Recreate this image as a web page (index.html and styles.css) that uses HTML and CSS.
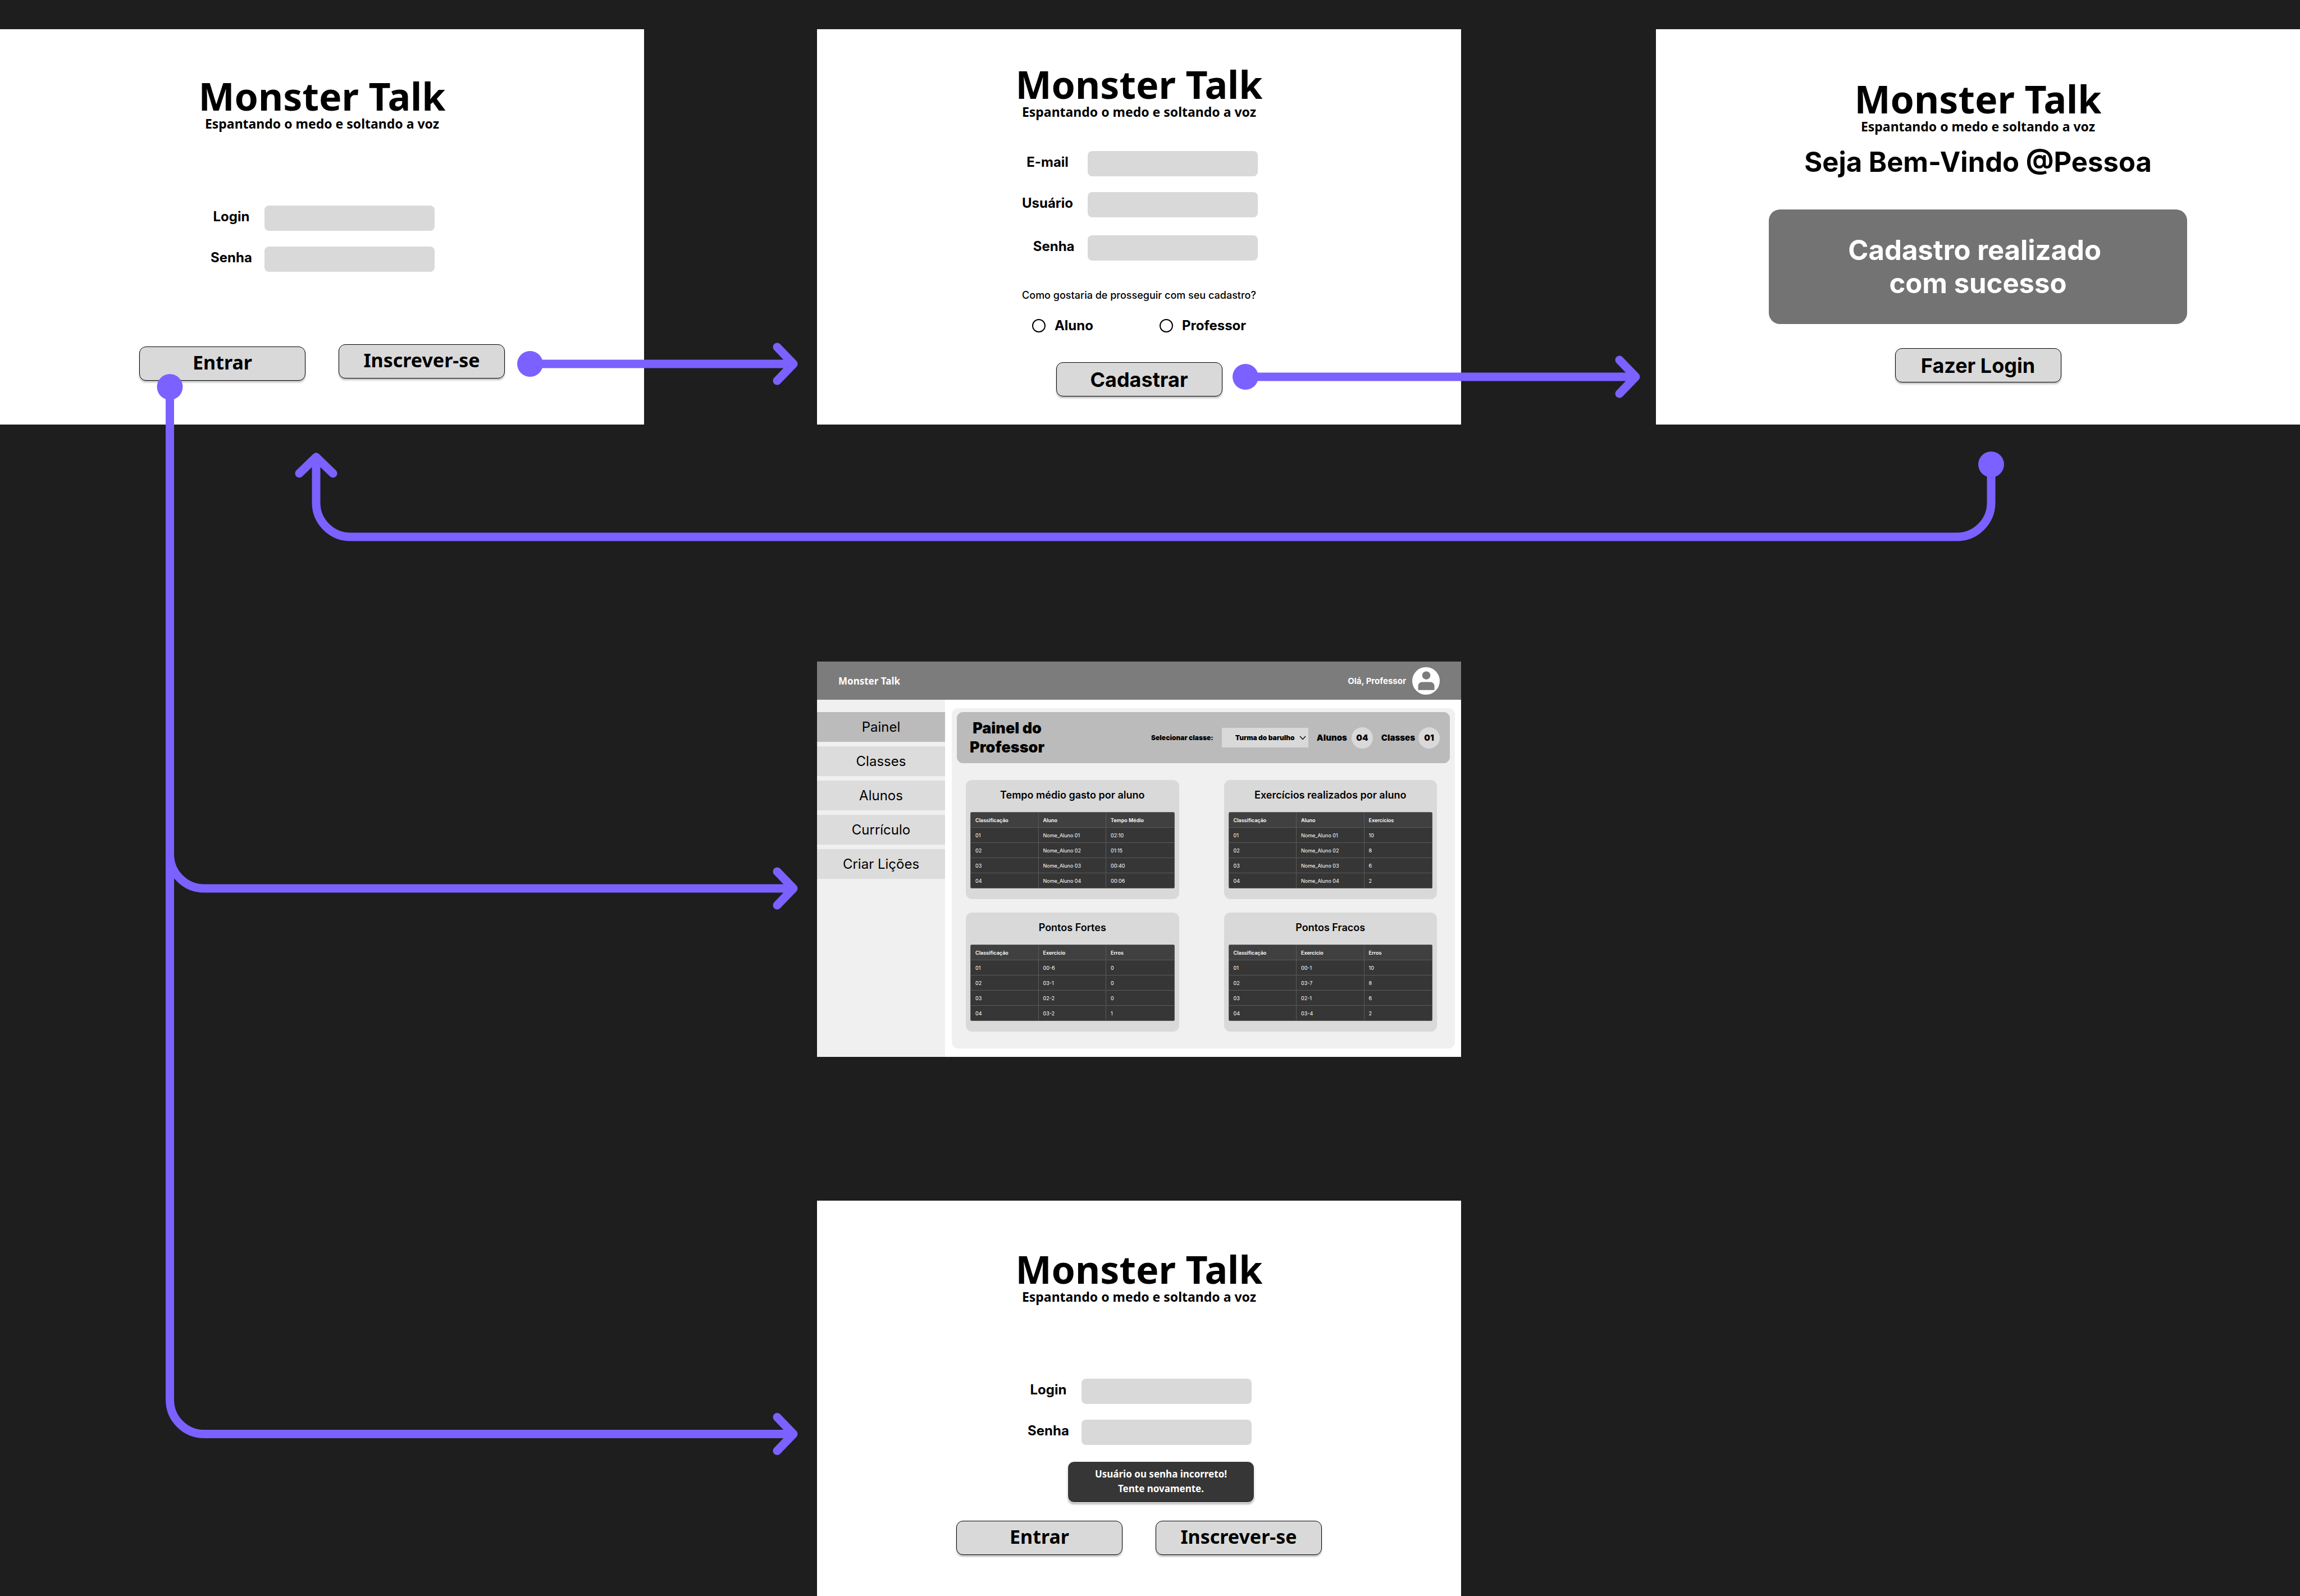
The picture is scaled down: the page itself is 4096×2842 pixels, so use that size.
FILE: index.html
```html
<!DOCTYPE html>
<html lang="pt-BR">
<head>
<meta charset="utf-8">
<meta name="viewport" content="width=device-width, initial-scale=1">
<title>Monster Talk – fluxo de telas</title>
<link rel="stylesheet" href="styles.css">
</head>
<body>
<main class="board">

  <section class="screen screen--login">
    <header class="brand">
      <h1 class="brand__name">Monster Talk</h1>
      <p class="brand__tagline">Espantando o medo e soltando a voz</p>
    </header>
    <form class="form">
      <div class="fields">
        <div class="field">
          <label class="field__label" for="login-user">Login</label>
          <input class="field__input" id="login-user" type="text">
        </div>
        <div class="field">
          <label class="field__label" for="login-pass">Senha</label>
          <input class="field__input" id="login-pass" type="password">
        </div>
      </div>
      <div class="actions actions--stepped">
        <button class="btn btn--brand" type="button">Entrar</button>
        <button class="btn btn--brand" type="button">Inscrever-se</button>
      </div>
    </form>
  </section>

  <section class="screen screen--signup">
    <header class="brand">
      <h1 class="brand__name">Monster Talk</h1>
      <p class="brand__tagline">Espantando o medo e soltando a voz</p>
    </header>
    <form class="form">
      <div class="fields">
        <div class="field">
          <label class="field__label" for="signup-email">E-mail</label>
          <input class="field__input" id="signup-email" type="email">
        </div>
        <div class="field">
          <label class="field__label" for="signup-user">Usuário</label>
          <input class="field__input" id="signup-user" type="text">
        </div>
        <div class="field field--last">
          <label class="field__label" for="signup-pass">Senha</label>
          <input class="field__input" id="signup-pass" type="password">
        </div>
      </div>
      <fieldset class="roles">
        <legend class="roles__question">Como gostaria de prosseguir com seu cadastro?</legend>
        <div class="roles__options">
          <label class="role"><input class="role__input" type="radio" name="role">Aluno</label>
          <label class="role"><input class="role__input" type="radio" name="role">Professor</label>
        </div>
      </fieldset>
      <button class="btn" type="button">Cadastrar</button>
    </form>
  </section>

  <section class="screen screen--welcome">
    <header class="brand">
      <h1 class="brand__name">Monster Talk</h1>
      <p class="brand__tagline">Espantando o medo e soltando a voz</p>
    </header>
    <h2 class="welcome">Seja Bem-Vindo @Pessoa</h2>
    <p class="notice">Cadastro realizado&nbsp;<br>com sucesso</p>
    <button class="btn" type="button">Fazer Login</button>
  </section>

  <section class="screen screen--dashboard">
    <header class="topbar">
      <span class="topbar__brand">Monster Talk</span>
      <div class="topbar__user">
        <span>Olá, Professor</span>
        <svg class="avatar" viewBox="0 0 49 49" aria-hidden="true">
          <circle cx="24.5" cy="24.5" r="24.5" fill="#fff"/>
          <circle cx="25" cy="14.7" r="7.3" fill="#7c7c7c"/>
          <path d="M10.5 40.7V33.4a7 7 0 0 1 7-7H32.5a7 7 0 0 1 7 7V40.7Z" fill="#7c7c7c"/>
        </svg>
      </div>
    </header>
    <div class="layout">
      <nav class="menu">
        <a class="menu__item menu__item--active" href="#painel">Painel</a>
        <a class="menu__item" href="#classes">Classes</a>
        <a class="menu__item" href="#alunos">Alunos</a>
        <a class="menu__item" href="#curriculo">Currículo</a>
        <a class="menu__item" href="#licoes">Criar Lições</a>
      </nav>
      <div class="content">
        <div class="panel">
          <div class="banner">
            <h2 class="banner__title">Painel do<br>Professor</h2>
            <div class="filters">
              <label class="filters__label" for="class-select">Selecionar classe:</label>
              <span class="picker">
                <select class="picker__select" id="class-select"><option>Turma do barulho</option></select>
                <svg class="picker__arrow" viewBox="0 0 12 8" aria-hidden="true"><path d="M1 1 6 6.5 11 1" fill="none" stroke="#000" stroke-width="1.3"/></svg>
              </span>
              <span class="count count--students">Alunos <span class="count__value">04</span></span>
              <span class="count">Classes <span class="count__value">01</span></span>
            </div>
          </div>
          <div class="cards">
            <section class="card">
              <h3 class="card__title">Tempo médio gasto por aluno</h3>
              <table class="table">
                <thead><tr><th>Classificação</th><th>Aluno</th><th>Tempo Médio</th></tr></thead>
                <tbody>
                  <tr><td>01</td><td>Nome_Aluno 01</td><td>02:10</td></tr>
                  <tr><td>02</td><td>Nome_Aluno 02</td><td>01:15</td></tr>
                  <tr><td>03</td><td>Nome_Aluno 03</td><td>00:40</td></tr>
                  <tr><td>04</td><td>Nome_Aluno 04</td><td>00:06</td></tr>
                </tbody>
              </table>
            </section>
            <section class="card">
              <h3 class="card__title">Exercícios realizados por aluno</h3>
              <table class="table">
                <thead><tr><th>Classificação</th><th>Aluno</th><th>Exercícios</th></tr></thead>
                <tbody>
                  <tr><td>01</td><td>Nome_Aluno 01</td><td>10</td></tr>
                  <tr><td>02</td><td>Nome_Aluno 02</td><td>8</td></tr>
                  <tr><td>03</td><td>Nome_Aluno 03</td><td>6</td></tr>
                  <tr><td>04</td><td>Nome_Aluno 04</td><td>2</td></tr>
                </tbody>
              </table>
            </section>
            <section class="card">
              <h3 class="card__title">Pontos Fortes</h3>
              <table class="table">
                <thead><tr><th>Classificação</th><th>Exercicio</th><th>Erros</th></tr></thead>
                <tbody>
                  <tr><td>01</td><td>00-6</td><td>0</td></tr>
                  <tr><td>02</td><td>03-1</td><td>0</td></tr>
                  <tr><td>03</td><td>02-2</td><td>0</td></tr>
                  <tr><td>04</td><td>03-2</td><td>1</td></tr>
                </tbody>
              </table>
            </section>
            <section class="card">
              <h3 class="card__title">Pontos Fracos</h3>
              <table class="table">
                <thead><tr><th>Classificação</th><th>Exercicio</th><th>Erros</th></tr></thead>
                <tbody>
                  <tr><td>01</td><td>00-1</td><td>10</td></tr>
                  <tr><td>02</td><td>03-7</td><td>8</td></tr>
                  <tr><td>03</td><td>02-1</td><td>6</td></tr>
                  <tr><td>04</td><td>03-4</td><td>2</td></tr>
                </tbody>
              </table>
            </section>
          </div>
        </div>
      </div>
    </div>
  </section>

  <section class="screen screen--error">
    <header class="brand">
      <h1 class="brand__name">Monster Talk</h1>
      <p class="brand__tagline">Espantando o medo e soltando a voz</p>
    </header>
    <form class="form">
      <div class="fields">
        <div class="field">
          <label class="field__label" for="retry-user">Login</label>
          <input class="field__input" id="retry-user" type="text">
        </div>
        <div class="field">
          <label class="field__label" for="retry-pass">Senha</label>
          <input class="field__input" id="retry-pass" type="password">
        </div>
      </div>
      <p class="alert" role="alert">Usuário ou senha incorreto!<br>Tente novamente.</p>
      <div class="actions">
        <button class="btn btn--brand" type="button">Entrar</button>
        <button class="btn btn--brand" type="button">Inscrever-se</button>
      </div>
    </form>
  </section>

  <!-- Flow connectors between the screens -->
  <svg class="connectors" viewBox="0 0 4096 2842" preserveAspectRatio="none" aria-hidden="true">
    <g class="connectors__lines">
      <path d="M944 648H1413M1384 618 1413 648 1384 678"/>
      <path d="M2218 671H2913M2884 641 2913 671 2884 701"/>
      <path d="M3546 827V895A61 61 0 0 1 3485 956H624A61 61 0 0 1 563 895V814M533 843 563 814 593 843"/>
      <path d="M302.5 689V1521A61 61 0 0 0 363.5 1582H1413M1384 1552 1413 1582 1384 1612"/>
      <path d="M302.5 689V2492.5A61 61 0 0 0 363.5 2553.5H1413M1384 2523.5 1413 2553.5 1384 2583.5"/>
    </g>
    <g class="connectors__dots">
      <circle cx="944" cy="648" r="23"/>
      <circle cx="302.5" cy="689" r="23"/>
      <circle cx="2218" cy="671" r="23"/>
      <circle cx="3546" cy="827" r="23"/>
    </g>
  </svg>
</main>
</body>
</html>
```
FILE: styles.css
```css
:root {
  --ui: Inter, "Liberation Sans", sans-serif;
  --brand: "Noto Sans", "Open Sans", sans-serif;
  --canvas: #1e1e1e;
  --flow: #7b61ff;
  --fill: #d9d9d9;
}

* {
  box-sizing: border-box;
}

body {
  margin: 0;
  background: var(--canvas);
  color: #000;
  font-family: var(--ui);
}

h1, h2, h3, p {
  margin: 0;
}

/* Board: three columns of screens with gutters between them */
.board {
  position: relative;
  display: grid;
  grid-template-columns: 1147fr 308fr 1147fr 347fr 1147fr;
  grid-template-rows: auto 422px auto 256px auto;
  padding-top: 52px;
}

.screen {
  display: flex;
  flex-direction: column;
  align-items: center;
  min-width: 0;
  min-height: 704px;
  background: #fff;
}

.screen--login { grid-area: 1 / 1; padding-top: 84px; }
.screen--signup { grid-area: 1 / 3; padding-top: 63px; }
.screen--welcome { grid-area: 1 / 5; padding-top: 89px; }
.screen--dashboard { grid-area: 3 / 3; align-items: stretch; }
.screen--error { grid-area: 5 / 3; padding-top: 87px; }

.connectors {
  position: absolute;
  inset: 0;
  width: 100%;
  height: 100%;
  pointer-events: none;
}

.connectors__lines {
  fill: none;
  stroke: var(--flow);
  stroke-width: 15;
  stroke-linecap: round;
  stroke-linejoin: round;
}

.connectors__dots {
  fill: var(--flow);
}

/* Brand block */
.brand {
  font-family: var(--brand);
  font-weight: 700;
  text-align: center;
}

.brand__name {
  font-size: 68px;
  line-height: 70px;
}

.brand__tagline {
  font-size: 23px;
  line-height: 28px;
}

/* Forms */
.form {
  display: flex;
  flex-direction: column;
  align-items: center;
}

.fields {
  display: flex;
  flex-direction: column;
  gap: 28px;
  margin-top: 132px;
}

.field {
  display: flex;
  align-items: flex-start;
  gap: 20px;
}

.field__label {
  width: 78px;
  font-size: 24px;
  font-weight: 700;
  line-height: 39px;
  text-align: center;
}

.field__input {
  width: 303px;
  height: 45px;
  padding: 0 12px;
  border: 0;
  border-radius: 8px;
  background: var(--fill);
  font: 400 24px var(--ui);
}

.screen--signup .fields {
  margin-top: 56px;
}

.screen--signup .field {
  gap: 23px;
}

.screen--signup .field__label {
  width: 96px;
}

.screen--signup .field--last {
  margin-top: 4px;
}

.field--last .field__label {
  text-align: right;
}

.roles {
  display: flex;
  flex-direction: column;
  align-items: center;
  margin: 50px 0 53px;
  padding: 0;
  border: 0;
}

.roles__question {
  padding: 0;
  font-size: 18px;
  font-weight: 500;
  line-height: 24px;
}

.roles__options {
  display: flex;
  gap: 118px;
  margin-top: 30px;
}

.role {
  display: flex;
  align-items: center;
  gap: 16px;
  font-size: 24px;
  font-weight: 700;
  line-height: 24px;
}

.role__input {
  appearance: none;
  width: 24px;
  height: 24px;
  margin: 0;
  border: 2px solid #000;
  border-radius: 50%;
}

.actions {
  display: flex;
  align-items: flex-start;
  gap: 59px;
  margin-top: 32px;
}

.actions--stepped {
  margin-top: 129px;
}

.actions--stepped .btn:first-child {
  margin-top: 4px;
}

.btn {
  width: 296px;
  height: 61px;
  padding: 0;
  border: 1px solid #000;
  border-radius: 12px;
  background: var(--fill);
  box-shadow: 0 3px 3px rgba(0, 0, 0, 0.25);
  color: #000;
  font: 700 36px var(--ui);
}

.btn--brand {
  padding-bottom: 5px;
  font: 700 34px var(--brand);
}

.alert {
  width: 333px;
  margin: 29px 0 0 78px;
  padding: 9px 0 11px;
  border: 1px solid #fff;
  border-radius: 12px;
  background: #363636;
  box-shadow: 0 3px 3px rgba(0, 0, 0, 0.25);
  color: #fff;
  font: 700 17px/26px var(--brand);
  text-align: center;
}

/* Welcome screen */
.welcome {
  margin-top: 21px;
  font-size: 49px;
  font-weight: 700;
  line-height: 58px;
}

.notice {
  width: 745px;
  margin: 55px 0 43px;
  padding: 43px 0;
  border-radius: 20px;
  background: #737373;
  color: #fff;
  font-size: 49px;
  font-weight: 700;
  line-height: 59px;
  text-align: center;
}

/* Dashboard */
.topbar {
  display: flex;
  align-items: center;
  justify-content: space-between;
  height: 68px;
  padding: 0 38px;
  background: #7c7c7c;
  color: #fff;
}

.topbar__brand {
  font: 700 17px var(--brand);
}

.topbar__user {
  display: flex;
  align-items: center;
  gap: 11px;
  font-size: 15px;
  font-weight: 700;
}

.avatar {
  width: 49px;
  height: 49px;
}

.layout {
  display: flex;
  flex: 1;
}

.menu {
  display: flex;
  flex-direction: column;
  gap: 8px;
  width: 228px;
  padding-top: 22px;
  background: #f0f0f0;
}

.menu__item {
  background: #dcdcdc;
  color: #000;
  font-size: 24px;
  line-height: 53px;
  text-align: center;
  text-decoration: none;
}

.menu__item--active {
  background: #bbb;
}

.content {
  display: flex;
  flex: 1;
  padding: 15px 11px 15px 12px;
}

.panel {
  flex: 1;
  padding: 7px 9px;
  border-radius: 11px;
  background: #f0f0f0;
}

.banner {
  display: flex;
  align-items: center;
  justify-content: space-between;
  height: 91px;
  padding: 0 18px 0 23px;
  border-radius: 11px;
  background: #bbb;
  font-weight: 900;
}

.banner__title {
  font-size: 27px;
  font-weight: 900;
  line-height: 34px;
  text-align: center;
}

.filters {
  display: flex;
  align-items: center;
  gap: 15px;
}

.filters__label {
  font-size: 12px;
}

.picker {
  position: relative;
}

.picker__select {
  appearance: none;
  display: block;
  width: 154px;
  height: 35px;
  padding: 0 0 0 24px;
  border: 0;
  border-radius: 0;
  background: var(--fill);
  color: #000;
  font: 900 12px var(--ui);
}

.picker__arrow {
  position: absolute;
  top: 14px;
  right: 4px;
  width: 12px;
  height: 8px;
  pointer-events: none;
}

.count {
  display: flex;
  align-items: center;
  gap: 6px;
  font-size: 15px;
}

.count--students {
  gap: 8px;
}

.count__value {
  width: 38px;
  border-radius: 50%;
  background: var(--fill);
  line-height: 38px;
  text-align: center;
}

.cards {
  display: grid;
  grid-template-columns: 1fr 1fr;
  gap: 24px 80px;
  padding: 30px 23px 0 16px;
}

.card {
  padding: 0 8px 19px;
  border-radius: 11px;
  background: var(--fill);
}

.card__title {
  margin-bottom: 3px;
  font-size: 18px;
  font-weight: 600;
  line-height: 54px;
  text-align: center;
}

.table {
  width: 100%;
  table-layout: fixed;
  overflow: hidden;
  border: 1px solid #5a5a5a;
  border-bottom: 0;
  border-radius: 3px;
  border-spacing: 0;
  background: #363636;
  color: #fff;
  font-size: 9px;
}

.table th,
.table td {
  height: 27px;
  padding: 0 0 0 8px;
  border-right: 1px solid #5a5a5a;
  border-bottom: 1px solid #5a5a5a;
  text-align: left;
}

.table th {
  background: #404040;
  font-weight: 600;
}

.table th:last-child,
.table td:last-child {
  border-right: 0;
}
```
